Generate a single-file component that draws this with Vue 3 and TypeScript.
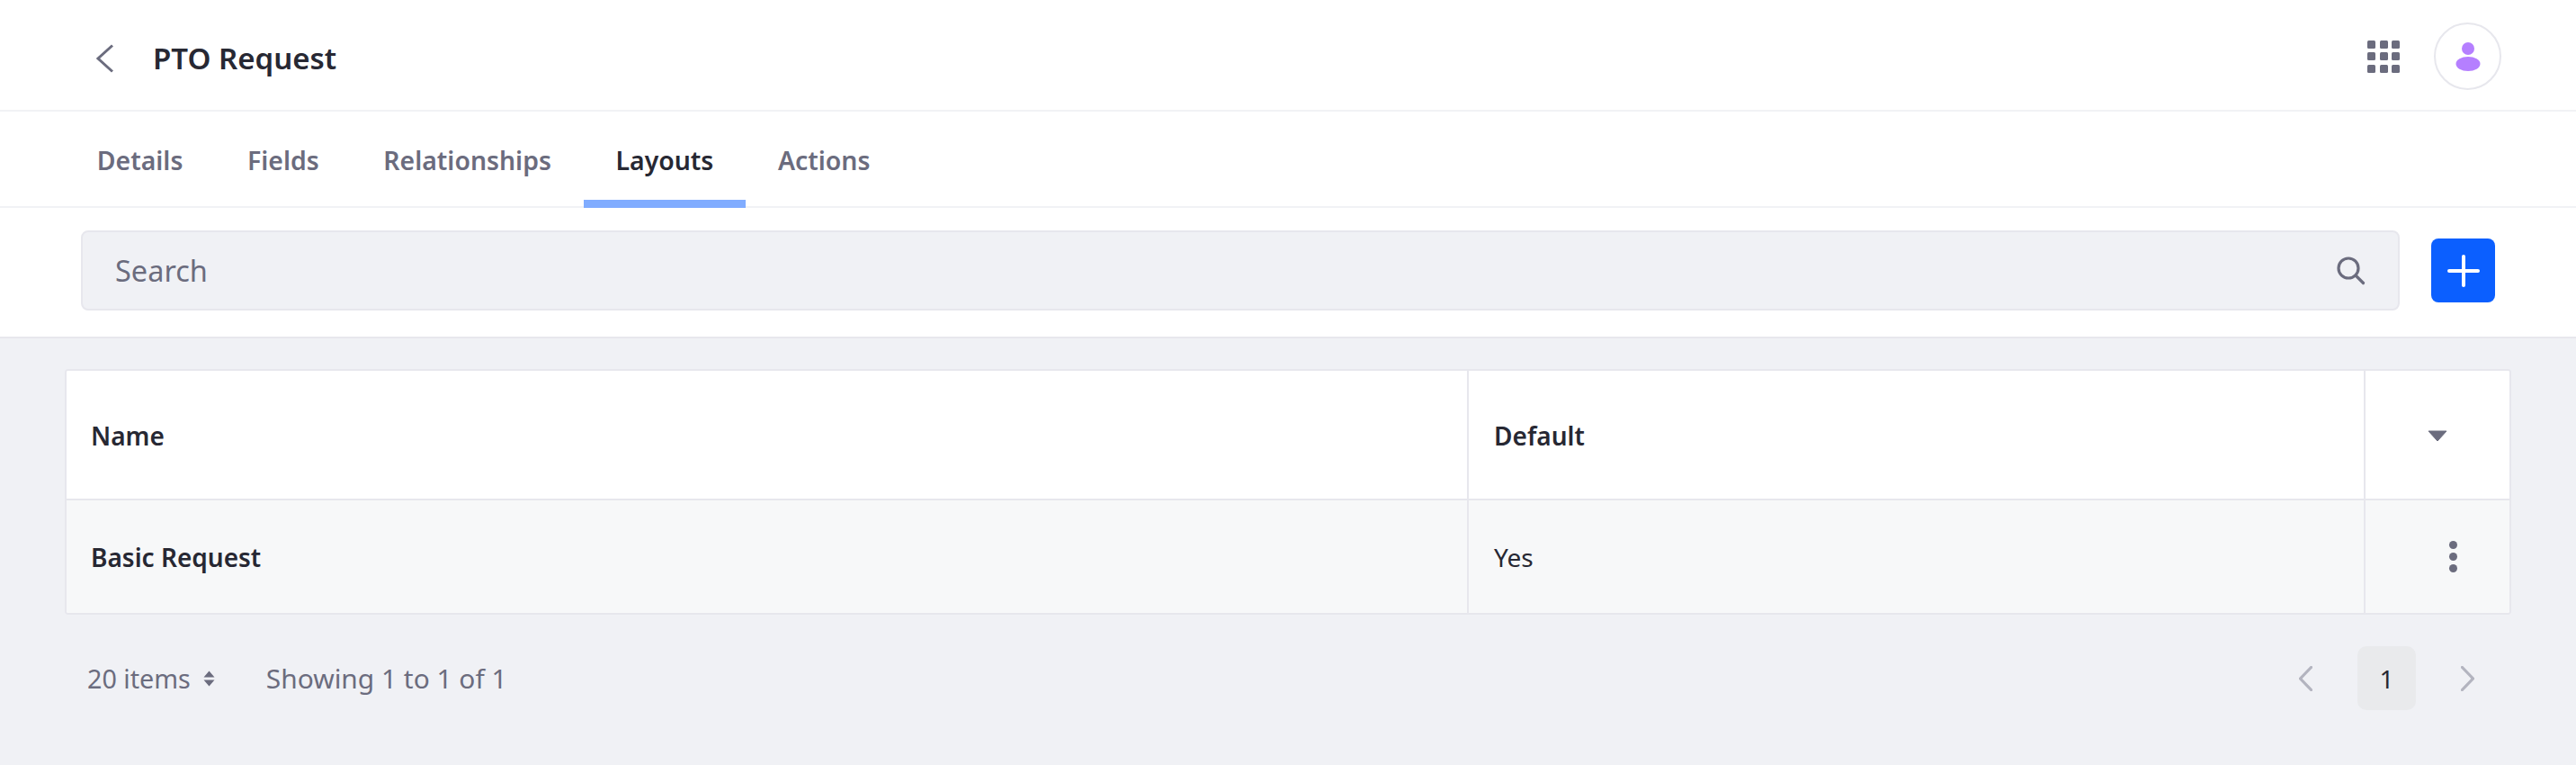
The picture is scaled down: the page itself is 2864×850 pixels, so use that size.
<script setup lang="ts">
const tabs = [
  { label: 'Details', active: false },
  { label: 'Fields', active: false },
  { label: 'Relationships', active: false },
  { label: 'Layouts', active: true },
  { label: 'Actions', active: false },
]
const gridCells = [0, 1, 2, 3, 4, 5, 6, 7, 8]
</script>

<template>
  <div class="page">
    <header class="topbar">
      <div class="title-group">
        <svg class="back" width="20" height="32" viewBox="0 0 20 32">
          <path d="M19 1.5 L3 16 L19 30.5" fill="none" stroke="#6b6c7e" stroke-width="3" />
        </svg>
        <h1 class="title">PTO Request</h1>
      </div>
      <div class="top-actions">
        <div class="apps">
          <span v-for="c in gridCells" :key="c" class="app-dot"></span>
        </div>
        <div class="avatar">
          <svg width="28" height="32" viewBox="0 0 28 32">
            <circle cx="14" cy="7" r="7" fill="#b57fff" />
            <ellipse cx="14" cy="24" rx="13.5" ry="8" fill="#b57fff" />
          </svg>
        </div>
      </div>
    </header>

    <nav class="tabs">
      <a v-for="t in tabs" :key="t.label" class="tab" :class="{ active: t.active }">{{ t.label }}</a>
    </nav>

    <section class="toolbar">
      <div class="search">
        <span class="placeholder">Search</span>
        <svg class="search-icon" width="32" height="32" viewBox="0 0 32 32">
          <circle cx="13" cy="13" r="11" fill="none" stroke="#6b6c7e" stroke-width="3.2" />
          <path d="M21 21 L29.5 29.5" stroke="#6b6c7e" stroke-width="3.2" stroke-linecap="round" />
        </svg>
      </div>
      <button class="add" type="button">
        <svg width="36" height="36" viewBox="0 0 36 36">
          <path d="M18 2 V34 M2 18 H34" stroke="#fff" stroke-width="4" stroke-linecap="round" />
        </svg>
      </button>
    </section>

    <main class="content">
      <div class="table">
        <div class="row head">
          <div class="cell c-name">Name</div>
          <div class="cell c-default">Default</div>
          <div class="cell c-act">
            <svg class="caret" width="22" height="13" viewBox="0 0 22 13">
              <path d="M1 1 H21 L11 12 Z" fill="#6b6c7e" stroke="#6b6c7e" stroke-linejoin="round" />
            </svg>
          </div>
        </div>
        <div class="row body">
          <div class="cell c-name">Basic Request</div>
          <div class="cell c-default plain">Yes</div>
          <div class="cell c-act">
            <div class="kebab"><span></span><span></span><span></span></div>
          </div>
        </div>
      </div>

      <footer class="pager">
        <div class="pager-left">
          <span class="items">20 items</span>
          <svg class="updown" width="13" height="18" viewBox="0 0 13 18">
            <path d="M6.5 0.5 L12.5 7.5 H0.5 Z M6.5 17.5 L12.5 10.5 H0.5 Z" fill="#6b6c7e" />
          </svg>
          <span class="showing">Showing 1 to 1 of 1</span>
        </div>
        <div class="pager-right">
          <svg width="15" height="28" viewBox="0 0 15 28">
            <path d="M13.5 1.5 L1.5 14 L13.5 26.5" fill="none" stroke="#b3b4bf" stroke-width="3.2" stroke-linecap="round" />
          </svg>
          <span class="page-num">1</span>
          <svg width="15" height="28" viewBox="0 0 15 28">
            <path d="M1.5 1.5 L13.5 14 L1.5 26.5" fill="none" stroke="#b3b4bf" stroke-width="3.2" stroke-linecap="round" />
          </svg>
        </div>
      </footer>
    </main>
  </div>
</template>

<style>
html, body { margin: 0; background: #f0f1f5; }
</style>

<style scoped>
.page {
  width: 2864px;
  height: 850px;
  overflow: hidden;
  background: #f0f1f5;
  font-family: "Noto Sans", "Open Sans", sans-serif;
  color: #272833;
}
.topbar {
  height: 122px;
  border-bottom: 2px solid #f1f2f5;
  background: #fff;
  display: flex;
  align-items: center;
  justify-content: space-between;
  padding: 0 83px 0 106px;
}
.title-group { display: flex; align-items: center; gap: 44px; padding-top: 7px; }
.back { display: block; }
.title { margin: 0; font-size: 33px; font-weight: 600; line-height: 40px; color: #272833; }
.top-actions { display: flex; align-items: center; gap: 38px; padding-top: 3px; }
.apps { display: grid; grid-template-columns: repeat(3, 9px); grid-auto-rows: 9px; gap: 4.5px; }
.app-dot { background: #6b6c7e; border-radius: 1.5px; }
.avatar {
  box-sizing: border-box;
  width: 75px;
  height: 75px;
  border: 2px solid #e7e7ed;
  border-radius: 50%;
  display: flex;
  align-items: center;
  justify-content: center;
  background: #fff;
}
.tabs {
  height: 105px;
  border-bottom: 2px solid #f1f2f5;
  background: #fff;
  display: flex;
  padding-left: 72px;
}
.tab {
  box-sizing: border-box;
  padding: 9px 35.8px 0;
  height: 107px;
  display: flex;
  align-items: center;
  font-size: 28.4px;
  font-weight: 600;
  color: #6b6c7e;
  border-bottom: 9px solid transparent;
}
.tab.active { color: #272833; border-bottom-color: #80acff; }
.toolbar {
  height: 139px;
  border-bottom: 2px solid #e7e7ed;
  background: #fff;
  display: flex;
  align-items: center;
  gap: 35px;
  padding: 0 0 4px 90px;
}
.search {
  box-sizing: border-box;
  width: 2578px;
  height: 89px;
  background: #f0f1f5;
  border: 2px solid #e7e7ed;
  border-radius: 8px;
  display: flex;
  align-items: center;
  justify-content: space-between;
  padding: 0 36px 0 36px;
}
.placeholder { font-size: 32.5px; color: #6b6c7e; }
.search-icon { margin-top: 1px; }
.add {
  width: 71px;
  height: 71px;
  border: none;
  border-radius: 8px;
  background: #0b5fff;
  display: flex;
  align-items: center;
  justify-content: center;
  padding: 0;
}
.content { padding: 34px 72px 0 72px; }
.table {
  background: #fff;
  border: 2px solid #e7e7ed;
  border-radius: 4px;
  overflow: hidden;
}
.row { display: flex; }
.row.head { height: 144px; box-sizing: border-box; background: #fff; border-bottom: 2px solid #e7e7ed; }
.row.body { height: 125px; background: #f7f8f9; }
.cell { display: flex; align-items: center; font-size: 28px; box-sizing: border-box; padding-top: 2px; }
.row.body .cell { padding-top: 0; }
.c-name {
  width: 1559px;
  padding-left: 27px;
  font-weight: 600;
  border-right: 2px solid #e7e7ed;
}
.c-default {
  width: 997px;
  padding-left: 28px;
  font-weight: 600;
  border-right: 2px solid #e7e7ed;
}
.plain { font-weight: 400; }
.c-act { flex: 1; justify-content: center; }
.kebab { display: flex; flex-direction: column; gap: 4.3px; margin-left: 35px; }
.kebab span { width: 9px; height: 9px; border-radius: 50%; background: #6b6c7e; }
.pager {
  display: flex;
  align-items: center;
  justify-content: space-between;
  margin-top: 35px;
  height: 71px;
}
.pager-left { display: flex; align-items: center; padding: 0 0 0 25px; color: #6b6c7e; }
.items { font-size: 28.7px; }
.showing { font-size: 29.9px; }
.updown { margin: 0 57px 0 14px; }
.pager-right { display: flex; align-items: center; gap: 50px; padding-right: 41px; }
.page-num {
  width: 65px;
  height: 71px;
  background: #e9eaec;
  border-radius: 10px;
  display: flex;
  align-items: center;
  justify-content: center;
  font-size: 28px;
  color: #272833;
}
</style>
